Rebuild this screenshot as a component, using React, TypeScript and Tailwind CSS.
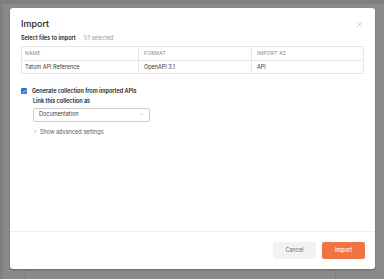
import { ChevronDown, ChevronRight, X, Check } from 'lucide-react';

const rows = [{ name: 'Tatum API Reference', format: 'OpenAPI 3.1', importAs: 'API' }];

export default function App() {
  return (
    <div
      className="relative w-[384px] h-[279px] overflow-hidden bg-[#8a8a8a]"
      style={{ fontFamily: 'Inter, "Noto Sans", sans-serif' }}
    >
      {/* dimmed app behind the modal */}
      <div className="absolute left-0 top-0 w-[384px] h-[4px] bg-[#7f7f7f]" />
      <div className="absolute left-0 top-0 w-[3px] h-[279px] bg-[#7f7f7f]" />
      <div className="absolute left-[25px] top-[268px] w-px h-[11px] bg-[#7c7c7c]" />
      <div className="absolute left-[335px] top-0 w-px h-[279px] bg-[#808080]" />
      <div className="absolute left-[358px] top-[6px] text-[5px] text-[#6f6f6f]">Ma</div>

      {/* modal */}
      <div className="absolute left-[10px] top-[8px] w-[365px] h-[261px] bg-white rounded-[3px] shadow-[0_1px_2px_rgba(0,0,0,0.25)] flex flex-col">
        <div className="flex-1 px-[11px] pt-[11px]">
          <div className="flex items-center justify-between h-[10px]">
            <span className="text-[9px] font-medium text-[#212121]">Import</span>
            <X className="w-[7px] h-[7px] text-[#9a9a9a] mr-[1px]" strokeWidth={1.5} />
          </div>

          <div className="mt-[5px] flex items-center gap-[3px] text-[5.5px] leading-[8px]">
            <span className="font-semibold text-[#212121]">Select files to import</span>
            <span className="text-[#a0a0a0]">·</span>
            <span className="text-[#9a9a9a]">1/1 selected</span>
          </div>

          <div className="mt-[4px] w-[343px] border border-[#e6e6e6] text-[5.5px]">
            <div className="grid grid-cols-[117px_113px_1fr] h-[13px] items-stretch text-[#8a8a8a] text-[5px] tracking-[0.2px]">
              <div className="flex items-center pl-[3px] border-r border-[#e6e6e6]">NAME</div>
              <div className="flex items-center pl-[5px] border-r border-[#e6e6e6]">FORMAT</div>
              <div className="flex items-center pl-[5px]">IMPORT AS</div>
            </div>
            {rows.map((r) => (
              <div
                key={r.name}
                className="grid grid-cols-[117px_113px_1fr] h-[13px] items-stretch border-t border-[#e6e6e6] text-[#3a3a3a]"
              >
                <div className="flex items-center pl-[3px] border-r border-[#e6e6e6]">{r.name}</div>
                <div className="flex items-center pl-[5px] border-r border-[#e6e6e6]">{r.format}</div>
                <div className="flex items-center pl-[5px]">{r.importAs}</div>
              </div>
            ))}
          </div>

          <div className="mt-[13px] flex items-center gap-[5px]">
            <div className="w-[6px] h-[6px] rounded-[1px] bg-[#2f6fd6] flex items-center justify-center">
              <Check className="w-[5px] h-[5px] text-white" strokeWidth={4} />
            </div>
            <span className="text-[5.5px] font-semibold text-[#212121]">
              Generate collection from imported APIs
            </span>
          </div>

          <div className="pl-[12px]">
            <div className="mt-[2px] text-[5.5px] font-semibold text-[#212121]">Link this collection as</div>
            <div className="mt-[2px] w-[117px] h-[14px] border border-[#cfcfcf] rounded-[2px] flex items-center justify-between pl-[5px] pr-[5px]">
              <span className="text-[5.5px] text-[#3a3a3a]">Documentation</span>
              <ChevronDown className="w-[5px] h-[5px] text-[#8a8a8a]" strokeWidth={2} />
            </div>
            <div className="mt-[6px] flex items-center gap-[2px] text-[5.5px] text-[#5a5a5a]">
              <ChevronRight className="w-[5px] h-[5px]" strokeWidth={2} />
              <span>Show advanced settings</span>
            </div>
          </div>
        </div>

        <div className="h-[38px] border-t border-[#ededed] flex items-center justify-end gap-[6px] pr-[10px] pb-[1px]">
          <button className="w-[43px] h-[17px] rounded-[2px] bg-[#f2f2f2] text-[5.5px] text-[#6b6b6b]">
            Cancel
          </button>
          <button className="w-[43px] h-[17px] rounded-[2px] bg-[#ef7343] text-[5.5px] font-medium text-white">
            Import
          </button>
        </div>
      </div>
    </div>
  );
}
